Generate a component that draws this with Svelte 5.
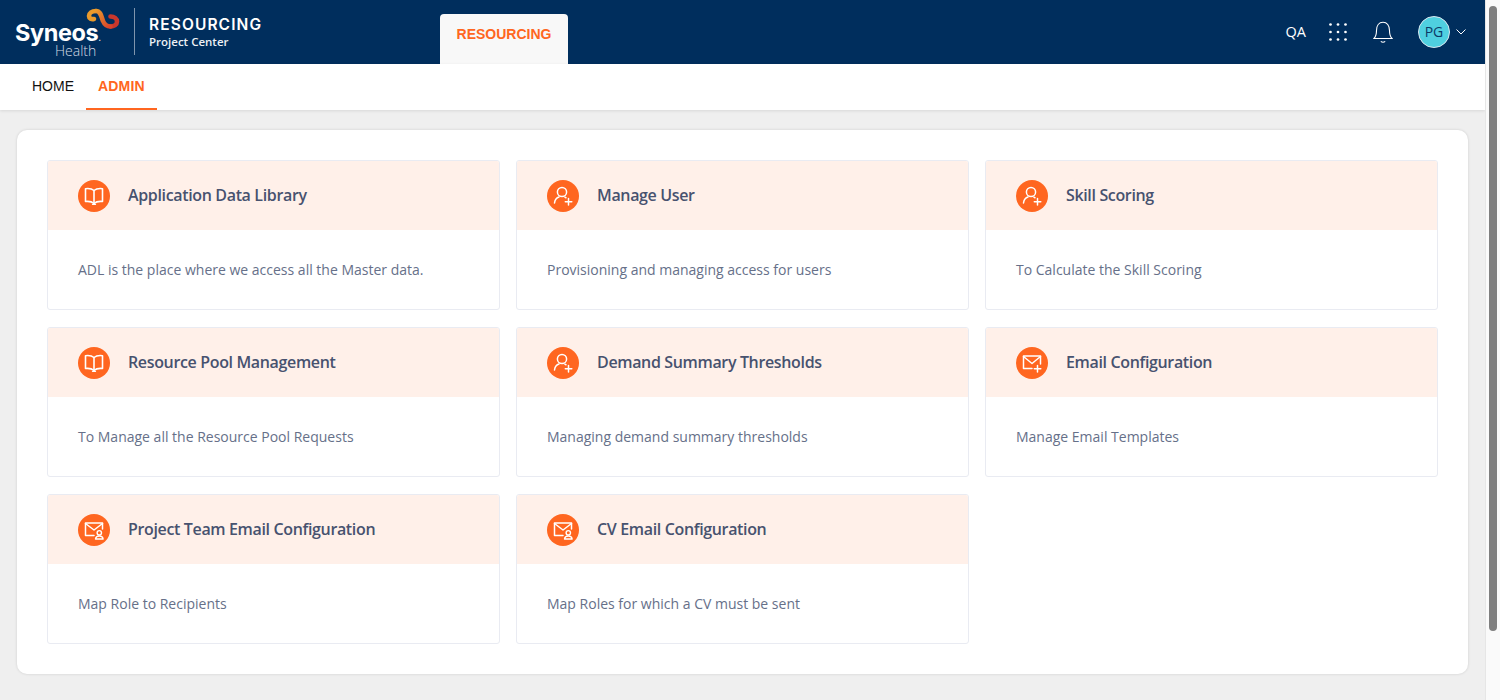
<script lang="ts">
  type Icon = 'book' | 'user' | 'mailplus' | 'mailuser';

  const cards: { title: string; desc: string; icon: Icon }[] = [
    { title: 'Application Data Library', desc: 'ADL is the place where we access all the Master data.', icon: 'book' },
    { title: 'Manage User', desc: 'Provisioning and managing access for users', icon: 'user' },
    { title: 'Skill Scoring', desc: 'To Calculate the Skill Scoring', icon: 'user' },
    { title: 'Resource Pool Management', desc: 'To Manage all the Resource Pool Requests', icon: 'book' },
    { title: 'Demand Summary Thresholds', desc: 'Managing demand summary thresholds', icon: 'user' },
    { title: 'Email Configuration', desc: 'Manage Email Templates', icon: 'mailplus' },
    { title: 'Project Team Email Configuration', desc: 'Map Role to Recipients', icon: 'mailuser' },
    { title: 'CV Email Configuration', desc: 'Map Roles for which a CV must be sent', icon: 'mailuser' }
  ];
</script>

<div class="page">
  <div class="content">
    <header class="topbar">
      <div class="logo">
        <svg class="rings" viewBox="0 0 34 22" width="34" height="22" fill="none" stroke-linecap="round">
          <defs>
            <linearGradient id="band" gradientUnits="userSpaceOnUse" x1="10" y1="2" x2="24" y2="19">
              <stop offset="0" stop-color="#ea9a2d" />
              <stop offset="1" stop-color="#d8432b" />
            </linearGradient>
          </defs>
          <path d="M10 3 C5.500 3 3 5.500 3 8 C3 10.500 5.500 11.500 8 11" stroke="#e99a2c" stroke-width="4.600" />
          <path d="M24.500 8.500 C28.500 8.500 31 10.800 31 13.500 C31 16.500 28 18.500 24.500 18.500" stroke="#c9372c" stroke-width="4.600" />
          <path d="M10 3 C15 3 15.500 9.500 17 13 C18.200 16 20.500 18.500 24.500 18.500" stroke="url(#band)" stroke-width="4.600" />
        </svg>
        <span class="logo-name">Syneos<i>.</i></span>
        <span class="logo-sub">Health</span>
      </div>
      <div class="product">
        <strong>RESOURCING</strong>
        <span>Project Center</span>
      </div>
      <div class="tab">RESOURCING</div>

      <div class="actions">
        <span class="env">QA</span>
        <svg class="grid-icon" viewBox="0 0 18 18" width="18" height="18">
          {#each [1.5, 9, 16.5] as cy}
            {#each [1.5, 9, 16.5] as cx}
              <circle {cx} {cy} r="1.35" fill="#fff" />
            {/each}
          {/each}
        </svg>
        <svg class="bell" viewBox="0 0 20 22" width="20" height="22" fill="none" stroke="#fff" stroke-width="1.1">
          <path d="M1 17.500 C3 15.500 3.500 13.500 3.500 9.500 C3.500 4.500 6 1.200 10 1.200 C14 1.200 16.500 4.500 16.500 9.500 C16.500 13.500 17 15.500 19 17.500 Z" />
          <path d="M7.800 20.300 C9 21.300 11 21.300 12.200 20.300" />
        </svg>
        <div class="avatar">PG</div>
        <svg class="chevron" viewBox="0 0 10 6" width="10" height="6" fill="none" stroke="#fff" stroke-width="1">
          <path d="M.5 .5 L5 5 L9.500 .5" />
        </svg>
      </div>
    </header>

    <nav class="subnav">
      <a class="link">HOME</a>
      <a class="link active">ADMIN</a>
    </nav>

    <main class="body">
      <section class="panel">
        {#each cards as card}
          <article class="card">
            <div class="card-head">
              <span class="badge">
                <svg viewBox="0 0 24 24" width="24" height="24" fill="none" stroke="#fff" stroke-width="1.300" stroke-linecap="round" stroke-linejoin="round">
                  {#if card.icon === 'book'}
                    <path d="M12 6.500 C10 4.800 7 4.300 3.500 4.700 L3.500 17.500 C7 17.100 10 17.700 12 19.500 C14 17.700 17 17.100 20.500 17.500 L20.500 4.700 C17 4.300 14 4.800 12 6.500Z" stroke-width="1.600" />
                    <path d="M12 6.500 L12 19.500" stroke-width="1.600" />
                    <path d="M10.500 20.300 L13.500 20.300" />
                  {:else if card.icon === 'user'}
                    <circle cx="11" cy="8" r="4.600" stroke-width="1.500" />
                    <path d="M3.500 19 C4 15.500 6 13.500 8 13" stroke-width="1.500" />
                    <path d="M14 13.300 L15 13.700" stroke-width="1.500" />
                    <path d="M17.500 14.500 L17.500 21 M14.300 17.800 L20.800 17.800" stroke-width="1.500" />
                  {:else if card.icon === 'mailplus'}
                    <path d="M12 17.500 L3.500 17.500 L3.500 5 L20.500 5 L20.500 13" stroke-width="1.500" />
                    <path d="M3.500 5.500 L12 12.500 L20.500 5.500" stroke-width="1.500" />
                    <path d="M17.500 14.500 L17.500 21 M14.300 17.800 L20.800 17.800" stroke-width="1.500" />
                  {:else}
                    <path d="M12 17.500 L3.500 17.500 L3.500 5 L20.500 5 L20.500 11" stroke-width="1.500" />
                    <path d="M3.500 5.500 L12 12 L20.500 5.500" stroke-width="1.500" />
                    <circle cx="17.300" cy="14.800" r="2.200" stroke-width="1.400" />
                    <path d="M13.500 21 C13.800 18.800 15.200 18 17.300 18 C19.400 18 20.800 18.800 21.100 21 Z" stroke-width="1.400" />
                  {/if}
                </svg>
              </span>
              <h3>{card.title}</h3>
            </div>
            <p>{card.desc}</p>
          </article>
        {/each}
      </section>
    </main>
  </div>

  <aside class="scrollbar"><span class="thumb"></span></aside>
</div>

<style>
  :global(body) {
    margin: 0;
    overflow: hidden;
    background: #efefef;
  }

  .page {
    display: flex;
    height: 700px;
    font-family: "Open Sans", sans-serif;
  }

  .content {
    flex: 1;
    min-width: 0;
    display: flex;
    flex-direction: column;
  }

  .topbar {
    height: 64px;
    background: #002e5d;
    display: flex;
    align-items: stretch;
    color: #fff;
    flex-shrink: 0;
  }

  .logo {
    position: relative;
    width: 135px;
    height: 47px;
    margin-top: 8px;
    border-right: 1px solid #7f95ad;
    box-sizing: border-box;
  }

  .rings {
    position: absolute;
    left: 86px;
    top: 0;
  }

  .logo-name {
    position: absolute;
    left: 15px;
    top: 15px;
    font: 700 23.500px/20px Inter, sans-serif;
    letter-spacing: -0.4px;
  }

  .logo-name i {
    font-style: normal;
    font-size: 10px;
    font-weight: 400;
    letter-spacing: 0;
  }

  .logo-sub {
    position: absolute;
    left: 55px;
    top: 36px;
    font: 300 14px/13px "Open Sans", sans-serif;
    color: #d3dbe4;
  }

  .product {
    display: flex;
    flex-direction: column;
    margin-left: 14px;
    padding-top: 15px;
    width: 291px;
  }

  .product strong {
    font: 600 15.500px/20px Inter, sans-serif;
    letter-spacing: 1.1px;
  }

  .product span {
    font-size: 11.500px;
    font-weight: 600;
    line-height: 14px;
    color: #eef1f5;
  }

  .tab {
    width: 128px;
    height: 50px;
    margin-top: 14px;
    box-sizing: border-box;
    padding-top: 12px;
    text-align: center;
    background: #f8f8f8;
    border-radius: 4px 4px 0 0;
    color: #ff6620;
    font: 700 14px/17px "Liberation Sans", sans-serif;
  }

  .actions {
    margin-left: auto;
    display: flex;
    align-items: center;
    padding-right: 19px;
  }

  .env {
    font-size: 14.500px;
    font-weight: 500;
    margin-right: 23px;
    margin-bottom: 1px;
  }

  .grid-icon {
    margin-right: 26px;
  }

  .bell {
    margin-right: 25px;
  }

  .avatar {
    width: 30px;
    height: 30px;
    border: 1px solid #d8e6ee;
    border-radius: 50%;
    background: #4fd0e0;
    color: #0b3a66;
    font-size: 14px;
    line-height: 30px;
    text-align: center;
    margin-right: 6px;
  }

  .subnav {
    height: 46px;
    background: #fff;
    display: flex;
    padding-left: 20px;
    flex-shrink: 0;
    box-sizing: border-box;
    box-shadow: 0 1px 3px rgba(0, 0, 0, 0.1);
  }

  .link {
    font: 400 14px/44px "Liberation Sans", sans-serif;
    color: #111;
    padding: 0 12px;
    height: 46px;
    box-sizing: border-box;
  }

  .link.active {
    color: #ff6620;
    font-weight: 700;
    letter-spacing: 0.2px;
    border-bottom: 2px solid #ff6620;
  }

  .body {
    padding: 20px 17px 0;
  }

  .panel {
    background: #fff;
    border-radius: 10px;
    box-shadow: 0 0 3px rgba(0, 0, 0, 0.14);
    padding: 30px;
    display: grid;
    grid-template-columns: repeat(3, 1fr);
    gap: 17px 16px;
  }

  .card {
    height: 150px;
    box-sizing: border-box;
    border: 1px solid #e9ebf2;
    border-radius: 3px;
    overflow: hidden;
  }

  .card-head {
    height: 69px;
    background: #fff0e9;
    display: flex;
    align-items: center;
    padding-left: 30px;
  }

  .badge {
    width: 32px;
    height: 32px;
    border-radius: 50%;
    background: #ff6620;
    display: flex;
    align-items: center;
    justify-content: center;
    margin-right: 18px;
  }

  h3 {
    margin: 0 0 2px;
    font-size: 16px;
    font-weight: 600;
    letter-spacing: -0.35px;
    color: #47526f;
  }

  p {
    margin: 30px 0 0 30px;
    font-size: 14px;
    line-height: 19px;
    color: #667089;
  }

  .scrollbar {
    width: 15px;
    flex-shrink: 0;
    background: #fafafa;
    border-left: 1px solid #e6e6e6;
    box-sizing: border-box;
    padding: 6px 3px 0 3px;
  }

  .thumb {
    display: block;
    width: 8px;
    height: 625px;
    background: #7f7f7f;
    border-radius: 4px;
  }
</style>
